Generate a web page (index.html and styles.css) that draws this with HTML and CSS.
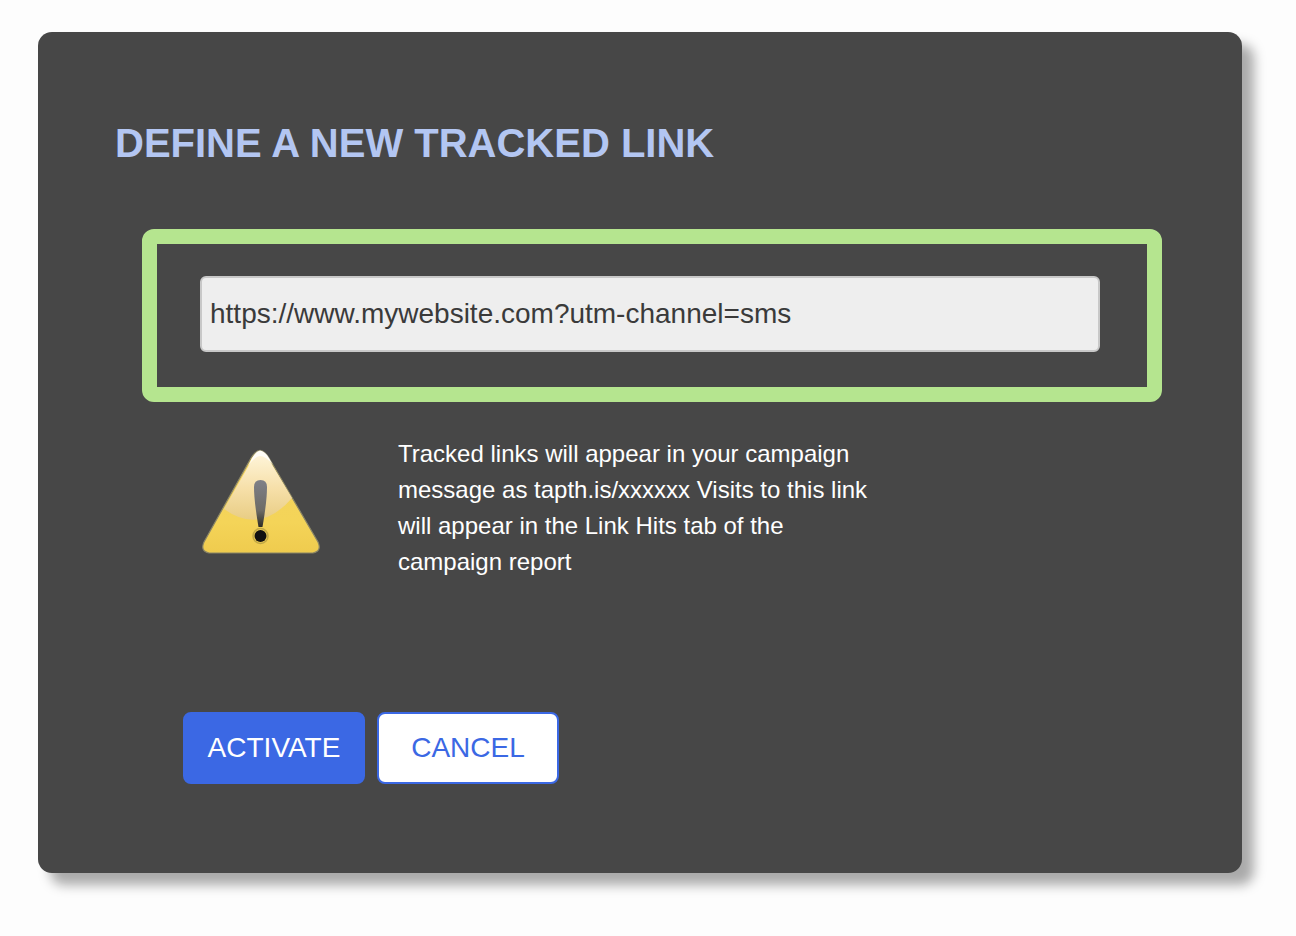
FILE: index.html
```html
<!DOCTYPE html>
<html lang="en">
  <head>
    <meta charset="UTF-8" />
    <meta name="viewport" content="width=device-width, initial-scale=1.0" />
    <title>Define a new tracked link</title>
    <link rel="stylesheet" href="styles.css">
  </head>
  <body>
    <div class="dialog">
      <h1 class="dialog-title">DEFINE A NEW TRACKED LINK</h1>

      <!-- Highlighted link field -->
      <div class="link-box">
        <input class="link-input" type="text" value="https://www.mywebsite.com?utm-channel=sms" />
      </div>

      <!-- Warning note -->
      <div class="notice">
        <svg class="notice-icon" viewBox="0 0 122 106" width="122" height="106">
          <defs>
            <linearGradient id="warnBase" x1="0" y1="0" x2="0" y2="1">
              <stop offset="0" stop-color="#f3d25e" />
              <stop offset="0.7" stop-color="#f4d458" />
              <stop offset="1" stop-color="#efcb4e" />
            </linearGradient>
            <linearGradient id="warnGloss" x1="0" y1="0" x2="0" y2="1">
              <stop offset="0" stop-color="#fff6dc" />
              <stop offset="0.55" stop-color="#f6dfa8" />
              <stop offset="1" stop-color="#e8cd84" />
            </linearGradient>
            <linearGradient id="warnMark" x1="0" y1="0" x2="0" y2="1">
              <stop offset="0" stop-color="#7f8088" />
              <stop offset="0.65" stop-color="#6d6b66" />
              <stop offset="1" stop-color="#2e2c24" />
            </linearGradient>
          </defs>
          <path d="M55 4 Q60 -1 65 4 Q67 6 69 9 L118 93 Q122 102 113 104 L9 104 Q0 102 4 93 L51 9 Q53 6 55 4 Z" fill="url(#warnBase)" stroke="#8a8566" stroke-width="1.2" />
          <path d="M60 3 Q65 3 68 9 L92 49 Q60 86 24 60 L53 9 Q56 3 60 3 Z" fill="url(#warnGloss)" />
          <path d="M60 1.5 Q65 2 69 9 L73 16 Q66 7 60 7 Q55 7 48 17 L52 9 Q56 2 60 1.5 Z" fill="#fffdf6" />
          <path d="M54 38 Q54 31 60.5 31 Q67 31 67 38 Q67 52 62.5 78 L58.5 78 Q54 52 54 38 Z" fill="url(#warnMark)" />
          <circle cx="60.5" cy="87" r="6" fill="#111111" />
          <circle cx="60.5" cy="87" r="7.5" fill="none" stroke="#8f8038" stroke-opacity="0.5" stroke-width="1.5" />
        </svg>
        <p class="notice-text">Tracked links will appear in your campaign message as tapth.is/xxxxxx Visits to this link will appear in the Link Hits tab of the campaign report</p>
      </div>

      <div class="actions">
        <button class="btn btn-primary">ACTIVATE</button>
        <button class="btn btn-outline">CANCEL</button>
      </div>
    </div>
  </body>
</html>
```

FILE: styles.css
```css
* {
  margin: 0;
  padding: 0;
  box-sizing: border-box;
}

body {
  padding: 32px 0 0 38px;
  height: 936px;
  overflow: hidden;
  background-color: #fdfdfd;
  font-family: "Liberation Sans", Arial, sans-serif;
}

.dialog {
  width: 1204px;
  height: 841px;
  padding: 88px 80px 0 77px;
  background-color: #474747;
  border-radius: 14px;
  box-shadow: 12px 12px 12px #aaaaaa;
}

.dialog-title {
  font-size: 40px;
  line-height: 46px;
  font-weight: 700;
  color: #b3c6f2;
}

.link-box {
  width: 1020px;
  height: 173px;
  margin: 63px 0 0 27px;
  padding: 32px 43px;
  border: 15px solid #b5e58f;
  border-radius: 12px;
}

.link-input {
  display: block;
  width: 900px;
  height: 76px;
  padding: 0 8px;
  background-color: #eeeeee;
  border: 2px solid #c8c8c8;
  border-radius: 6px;
  font-family: inherit;
  font-size: 28px;
  color: #3a3a3a;
}

.notice {
  display: flex;
  margin: 34px 0 0 85px;
}

.notice-icon {
  flex-shrink: 0;
  margin-top: 13px;
}

.notice-text {
  width: 480px;
  margin-left: 76px;
  font-size: 24px;
  line-height: 36px;
  color: #ffffff;
}

.actions {
  display: flex;
  gap: 12px;
  margin: 132px 0 0 68px;
}

.btn {
  width: 182px;
  height: 72px;
  border-radius: 8px;
  font-family: inherit;
  font-size: 28px;
  cursor: pointer;
}

.btn-primary {
  background-color: #3b68e4;
  border: 2px solid #3b68e4;
  color: #ffffff;
}

.btn-outline {
  background-color: #ffffff;
  border: 2px solid #3b68e4;
  color: #3b68e4;
}
```
